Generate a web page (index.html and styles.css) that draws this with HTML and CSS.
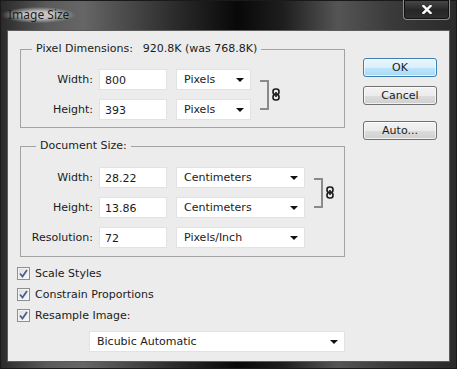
FILE: index.html
```html
<!DOCTYPE html>
<html lang="en">
<head>
    <meta charset="UTF-8">
    <title>Image Size</title>
    <link rel="stylesheet" href="styles.css">
</head>
<body>
    <div class="window">
        <div class="titlebar">
            <span class="title">Image Size</span>
            <button class="close-btn" aria-label="Close">
                <svg width="10" height="9" viewBox="0 0 10 9">
                    <path d="M1.5 1 L8.5 8 M8.5 1 L1.5 8" stroke="#fff" stroke-width="2.4" stroke-linecap="square"/>
                </svg>
            </button>
        </div>

        <div class="content">
            <div class="main">
                <!-- Pixel dimensions -->
                <fieldset class="group group-pixels">
                    <legend><span>Pixel Dimensions:</span><span class="size">920.8K (was 768.8K)</span></legend>
                    <div class="linked">
                        <div class="rows">
                            <div class="row">
                                <label>Width:</label>
                                <span class="field">800</span>
                                <span class="select short">Pixels<i class="arrow"></i></span>
                            </div>
                            <div class="row">
                                <label>Height:</label>
                                <span class="field">393</span>
                                <span class="select short">Pixels<i class="arrow"></i></span>
                            </div>
                        </div>
                        <div class="link">
                            <span class="bracket"></span>
                            <svg class="chain" width="8" height="13" viewBox="0 0 8 13">
                                <rect x="1" y="1" width="6" height="5.5" rx="2.5" fill="none" stroke="#1a1a1a" stroke-width="1.6"/>
                                <rect x="1" y="6.5" width="6" height="5.5" rx="2.5" fill="none" stroke="#1a1a1a" stroke-width="1.6"/>
                                <path d="M4 4 V9" stroke="#1a1a1a" stroke-width="1.6"/>
                            </svg>
                        </div>
                    </div>
                </fieldset>

                <!-- Document size -->
                <fieldset class="group group-doc">
                    <legend>Document Size:</legend>
                    <div class="rows">
                        <div class="linked">
                            <div class="rows">
                                <div class="row">
                                    <label>Width:</label>
                                    <span class="field">28.22</span>
                                    <span class="select">Centimeters<i class="arrow"></i></span>
                                </div>
                                <div class="row">
                                    <label>Height:</label>
                                    <span class="field">13.86</span>
                                    <span class="select">Centimeters<i class="arrow"></i></span>
                                </div>
                            </div>
                            <div class="link">
                                <span class="bracket"></span>
                                <svg class="chain" width="8" height="13" viewBox="0 0 8 13">
                                    <rect x="1" y="1" width="6" height="5.5" rx="2.5" fill="none" stroke="#1a1a1a" stroke-width="1.6"/>
                                    <rect x="1" y="6.5" width="6" height="5.5" rx="2.5" fill="none" stroke="#1a1a1a" stroke-width="1.6"/>
                                    <path d="M4 4 V9" stroke="#1a1a1a" stroke-width="1.6"/>
                                </svg>
                            </div>
                        </div>
                        <div class="row">
                            <label>Resolution:</label>
                            <span class="field">72</span>
                            <span class="select">Pixels/Inch<i class="arrow"></i></span>
                        </div>
                    </div>
                </fieldset>

                <div class="checks">
                    <div class="check"><span class="box"><svg width="9" height="9" viewBox="0 0 9 9"><path d="M1 4.5 L3.5 7.5 L8 1" fill="none" stroke="#4b5e8c" stroke-width="1.8"/></svg></span>Scale Styles</div>
                    <div class="check"><span class="box"><svg width="9" height="9" viewBox="0 0 9 9"><path d="M1 4.5 L3.5 7.5 L8 1" fill="none" stroke="#4b5e8c" stroke-width="1.8"/></svg></span>Constrain Proportions</div>
                    <div class="check"><span class="box"><svg width="9" height="9" viewBox="0 0 9 9"><path d="M1 4.5 L3.5 7.5 L8 1" fill="none" stroke="#4b5e8c" stroke-width="1.8"/></svg></span>Resample Image:</div>
                </div>

                <span class="select resample">Bicubic Automatic<i class="arrow"></i></span>
            </div>

            <div class="buttons">
                <button class="btn btn-default">OK</button>
                <button class="btn">Cancel</button>
                <button class="btn btn-auto">Auto...</button>
            </div>
        </div>
    </div>
</body>
</html>
```

FILE: styles.css
```css
* {
    margin: 0;
    padding: 0;
    box-sizing: border-box;
}
body {
    font-family: "DejaVu Sans", sans-serif;
    font-size: 11px;
    color: #1b1b1b;
    background: #fff;
}
.window {
    width: 457px;
    height: 369px;
    display: flex;
    flex-direction: column;
    background: linear-gradient(90deg, #2a2a2a 0, #5a5a5a 10%, #666 18%, #2c2c2c 38%, #080808 52%, #1e1e1e 62%, #555 74%, #3a3a3a 86%, #2a2a2a 100%);
    border: 1px solid #1a1a1a;
}
.titlebar {
    height: 29px;
    display: flex;
    justify-content: space-between;
    align-items: flex-start;
}
.title {
    margin-top: 6px;
    margin-left: 1px;
    padding: 0 6px;
    line-height: 16px;
    font-family: "Noto Sans", sans-serif;
    font-size: 12px;
    color: #1c1c1c;
    background: radial-gradient(ellipse at center, rgba(215, 215, 215, 0.85) 30%, rgba(160, 160, 160, 0) 72%);
}
.close-btn {
    width: 47px;
    height: 20px;
    margin-top: -1px;
    margin-right: 6px;
    display: flex;
    justify-content: center;
    align-items: center;
    border: 1px solid #8c8c8c;
    border-top: none;
    border-radius: 0 0 4px 4px;
    background: linear-gradient(#4a4a4a, #262626 55%, #303030);
    box-shadow: inset 0 0 0 1px #111;
}
.content {
    flex: 1;
    margin: 0 6px 6px 6px;
    display: flex;
    gap: 18px;
    padding: 11px 0 0 9px;
    background: #ececec;
    border: 1px solid #5c5c5c;
}
.main {
    width: 328px;
    display: flex;
    flex-direction: column;
}
.group {
    margin-left: 3px;
    width: 325px;
    border: 1px solid #a3a3a3;
}
.group legend {
    padding: 0 4px;
    line-height: 14px;
}
.group-pixels legend {
    margin-left: 11px;
}
.group-pixels legend .size {
    margin-left: 10px;
}
.group-pixels {
    padding: 13px 0 7px 0;
}
.group-doc {
    margin-top: 11px;
    padding: 14px 0 8px 0;
}
.group-doc legend {
    margin-left: 15px;
}
.rows {
    display: flex;
    flex-direction: column;
    gap: 9px;
}
.linked {
    display: flex;
    align-items: center;
}
.row {
    display: flex;
    align-items: center;
    height: 21px;
}
.row label {
    width: 72px;
    text-align: right;
    margin-right: 6px;
}
.field {
    width: 68px;
    height: 21px;
    line-height: 21px;
    padding-left: 5px;
    background: #fff;
    border: 1px solid #e2e2e2;
    margin-right: 9px;
}
.select {
    width: 129px;
    height: 21px;
    padding: 0 6px 0 7px;
    display: flex;
    justify-content: space-between;
    align-items: center;
    background: #fff;
    border: 1px solid #e2e2e2;
}
.select.short {
    width: 75px;
}
.arrow {
    width: 0;
    height: 0;
    border-left: 4px solid transparent;
    border-right: 4px solid transparent;
    border-top: 4px solid #111;
}
.link {
    display: flex;
    align-items: center;
    margin-left: 9px;
}
.bracket {
    width: 9px;
    height: 30px;
    border: 2px solid #8a8a8a;
    border-left: none;
}
.chain {
    margin-left: 3px;
}
.checks {
    margin-top: 10px;
    display: flex;
    flex-direction: column;
    gap: 8px;
}
.check {
    display: flex;
    align-items: center;
    height: 13px;
    line-height: 13px;
}
.box {
    width: 13px;
    height: 13px;
    margin-right: 5px;
    display: flex;
    justify-content: center;
    align-items: center;
    border: 1px solid #8e8f8f;
    background: linear-gradient(135deg, #dcdcdc, #fbfbfb);
    box-shadow: inset 0 0 0 1px #f4f4f4;
}
.select.resample {
    margin-top: 9px;
    margin-left: 72px;
    width: 256px;
}
.buttons {
    padding-top: 16px;
    width: 74px;
    display: flex;
    flex-direction: column;
    gap: 9px;
}
.btn {
    width: 74px;
    height: 19px;
    font-family: "DejaVu Sans", sans-serif;
    font-size: 11px;
    color: #1b1b1b;
    border: 1px solid #707070;
    border-radius: 3px;
    background: linear-gradient(#f3f3f3 0, #ebebeb 50%, #dddddd 51%, #cfcfcf 100%);
    box-shadow: inset 0 0 0 1px rgba(255, 255, 255, 0.7);
}
.btn-default {
    border-color: #3c7fb1;
    background: linear-gradient(#eaf6fd 0, #d9f0fc 50%, #bee6fd 51%, #a7d9f5 100%);
}
.btn-auto {
    margin-top: 7px;
}
```
